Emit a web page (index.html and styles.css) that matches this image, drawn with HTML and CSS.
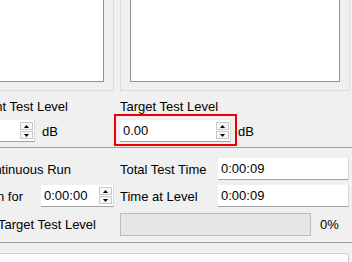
FILE: index.html
```html
<!DOCTYPE html>
<html lang="en">
<head>
    <meta charset="UTF-8">
    <meta name="viewport" content="width=device-width, initial-scale=1.0">
    <title>Test Level</title>

    <link rel="stylesheet" href="styles.css">
</head>
<body>

<div class="columns panels">
    <div class="panel panel-left"><div class="plot"></div></div>
    <div class="panel"><div class="plot"></div></div>
</div>

<div class="columns levels">
    <div>
        <div class="tail tail-level">Current Test Level</div>
        <div class="level-row">
            <div class="spin spin-level spin-offscreen">
                <span class="value">0.00</span>
                <span class="arrows">
                    <span><svg width="5" height="3" viewBox="0 0 5 3"><path d="M0 3H5L2.5 0Z"/></svg></span>
                    <span><svg width="5" height="3" viewBox="0 0 5 3"><path d="M0 0H5L2.5 3Z"/></svg></span>
                </span>
            </div>
            <span class="unit">dB</span>
        </div>
    </div>
    <div>
        <div class="label">Target Test Level</div>
        <div class="level-row">
            <div class="spin spin-level highlight">
                <span class="value">0.00</span>
                <span class="arrows">
                    <span><svg width="5" height="3" viewBox="0 0 5 3"><path d="M0 3H5L2.5 0Z"/></svg></span>
                    <span><svg width="5" height="3" viewBox="0 0 5 3"><path d="M0 0H5L2.5 3Z"/></svg></span>
                </span>
            </div>
            <span class="unit">dB</span>
        </div>
    </div>
</div>

<div class="columns timing">
    <div class="cell tail tail-run">Continuous Run</div>
    <div class="cell">
        <span class="field-label">Total Test Time</span>
        <span class="field">0:00:09</span>
    </div>

    <div class="cell tail">
        <span>Run for</span>
        <div class="spin spin-time">
            <span class="value">0:00:00</span>
            <span class="arrows">
                <span><svg width="5" height="3" viewBox="0 0 5 3"><path d="M0 3H5L2.5 0Z"/></svg></span>
                <span><svg width="5" height="3" viewBox="0 0 5 3"><path d="M0 0H5L2.5 3Z"/></svg></span>
            </span>
        </div>
    </div>
    <div class="cell">
        <span class="field-label">Time at Level</span>
        <span class="field">0:00:09</span>
    </div>

    <div class="cell tail tail-stop">Stop at Target Test Level</div>
    <div class="cell">
        <div class="progress"></div>
        <span class="percent">0%</span>
    </div>
</div>

<div class="bottom">
    <button class="save">Save Tool</button>
</div>

</body>
</html>
```

FILE: styles.css
```css
html, body {
    margin: 0;
}
body {
    width: 352px;
    height: 262px;
    overflow: hidden;
    background-color: #f0f0f0;
    font-family: "Liberation Sans", Arial, sans-serif;
    font-size: 13px;
    line-height: 15px;
    color: #000;
}
.columns {
    display: grid;
    grid-template-columns: 114px 230px;
    column-gap: 6px;
}

/* plot frames, top cut off */
.panel {
    border: 1px solid #dcdcdc;
    border-top: none;
    padding: 0 9px 8px;
}
.panel-left {
    margin-left: -30px;
}
.plot {
    height: 81px;
    background-color: #fff;
    border: 1px solid #939393;
    border-top: none;
}

.levels {
    padding: 8px 0 5px;
    border-bottom: 1px solid #a0a0a0;
}
.level-row {
    display: flex;
    align-items: center;
    margin-top: 6px;
}
.unit {
    margin-left: 7px;
}

/* labels whose start is cut off at the left edge */
.tail {
    display: flex;
    justify-content: flex-end;
    align-items: center;
    white-space: nowrap;
}
.tail-level {
    padding-right: 46px;
}
.tail-run {
    padding-right: 43px;
}
.tail-stop {
    padding-right: 18px;
}

.spin {
    position: relative;
    flex: none;
    display: flex;
    height: 22px;
    box-sizing: border-box;
    background-color: #fff;
    border-bottom: 1px solid #a0a0a0;
    border-right: 1px solid #dadada;
}
.spin-level {
    width: 111px;
}
.spin-offscreen {
    margin-left: -76px;
}
.spin-time {
    width: 73px;
    margin-left: 18px;
}
.spin .value {
    flex: 1;
    padding-left: 3px;
    line-height: 21px;
}
.arrows {
    display: flex;
    flex-direction: column;
    gap: 1px;
    width: 13px;
    padding: 2px 1px 2px 0;
}
.arrows span {
    flex: 1;
    display: flex;
    align-items: center;
    justify-content: center;
    border: 1px solid #c8c8c8;
    background-color: #f7f7f7;
}
.arrows svg {
    display: block;
    fill: #000;
}
.highlight::after {
    content: "";
    position: absolute;
    top: -6px;
    left: -6px;
    right: -7px;
    bottom: -5px;
    border: 2px solid #ee0000;
    pointer-events: none;
}

.timing {
    padding: 10px 0 6px;
    border-bottom: 1px solid #a0a0a0;
    grid-template-rows: 22px 22px 24px;
    row-gap: 5px;
}
.cell {
    display: flex;
    align-items: center;
    white-space: nowrap;
}
.field-label {
    width: 98px;
}
.field {
    width: 131px;
    height: 22px;
    box-sizing: border-box;
    padding-left: 3px;
    line-height: 21px;
    background-color: #fff;
    border-bottom: 1px solid #a0a0a0;
    border-right: 1px solid #dadada;
}
.progress {
    width: 191px;
    height: 23px;
    box-sizing: border-box;
    background-color: #e6e6e6;
    border: 1px solid #bcbcbc;
}
.percent {
    margin-left: 9px;
}

.bottom {
    padding: 10px 3px 0 0;
}
.save {
    display: block;
    margin: 0 0 0 -20px;
    width: calc(100% + 20px);
    box-sizing: border-box;
    padding: 5px 0 12px 91px;
    text-align: left;
    border: 1px solid #d0d0d0;
    border-radius: 3px;
    background-color: #fdfdfd;
    font-family: "Liberation Sans", Arial, sans-serif;
    font-size: 20px;
    line-height: 23px;
    color: #000;
}
```
